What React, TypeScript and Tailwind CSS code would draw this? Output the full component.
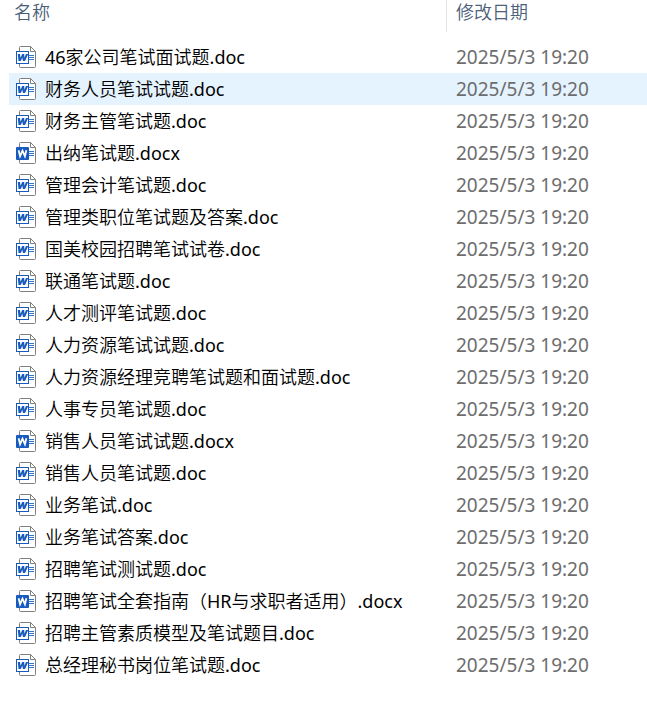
interface FileRow {
  name: string;
  modified: string;
}

const MODIFIED = '2025/5/3 19:20';

const files: FileRow[] = [
  '46家公司笔试面试题.doc',
  '财务人员笔试试题.doc',
  '财务主管笔试题.doc',
  '出纳笔试题.docx',
  '管理会计笔试题.doc',
  '管理类职位笔试题及答案.doc',
  '国美校园招聘笔试试卷.doc',
  '联通笔试题.doc',
  '人才测评笔试题.doc',
  '人力资源笔试试题.doc',
  '人力资源经理竞聘笔试题和面试题.doc',
  '人事专员笔试题.doc',
  '销售人员笔试试题.docx',
  '销售人员笔试题.doc',
  '业务笔试.doc',
  '业务笔试答案.doc',
  '招聘笔试测试题.doc',
  '招聘笔试全套指南（HR与求职者适用）.docx',
  '招聘主管素质模型及笔试题目.doc',
  '总经理秘书岗位笔试题.doc',
].map(name => ({ name, modified: MODIFIED }));

const HIGHLIGHTED = '财务人员笔试试题.doc';

// .doc gets the outlined badge, .docx the solid one
function WordIcon({ legacy }: { legacy: boolean }) {
  return (
    <svg viewBox="0 0 22 24" className="block w-[22px] h-6 shrink-0" aria-hidden="true">
      <path d="M5.5 1.5h10l5 5v15q0 1-1 1h-14q-1 0-1-1v-19q0-1 1-1z" fill="#fff" stroke="#7f7f7f" />
      <path d="M15.5 1.5v5h5" fill="none" stroke="#7f7f7f" />
      <path d="M14 10.5h5M14 12.5h5M14 14.5h5" stroke="#2f78d0" />
      {legacy ? (
        <>
          <rect x="1.5" y="6.5" width="12" height="12" fill="#fff" stroke="#185abd" />
          <path d="M2.8 9l.7 7h2.3l1.6-3.6.4 3.600h2.300L13.200 9h-2.200l-1.500 3.800L9.200 9H7.200l-1.700 3.800L5 9z" fill="#185abd" />
        </>
      ) : (
        <>
          <rect x="1" y="6" width="13" height="13" rx="1" fill="#185abd" />
          <path d="M3.6 9.200l1.500 6 2.400-5.500 2.400 5.500 1.500-6" fill="none" stroke="#fff" strokeWidth="1.8" />
        </>
      )}
    </svg>
  );
}

export default function App() {
  return (
    <main className="min-h-screen bg-white pl-[9px] font-['Noto_Sans','Noto_Sans_CJK_SC_DemiLight','Noto_Sans_CJK_SC',sans-serif] text-lg leading-8">
      <table className="w-full table-fixed border-collapse text-left">
        <thead>
          <tr className="h-[41px] align-top text-[#4c607a]">
            <th className="w-[438px] p-0 font-normal">
              <div className="h-8 border-r border-[#e5e5e5] pl-[5px] leading-6">名称</div>
            </th>
            <th className="p-0 pl-[9px] font-normal leading-6">修改日期</th>
          </tr>
        </thead>
        <tbody>
          {files.map(f => (
            <tr key={f.name} className={`h-8 ${f.name === HIGHLIGHTED ? 'bg-[#e5f3ff]' : ''}`}>
              <td className="p-0">
                <div className="flex h-8 items-center gap-2 pl-[6px] text-black whitespace-nowrap">
                  <WordIcon legacy={f.name.endsWith('.doc')} />
                  <span>{f.name}</span>
                </div>
              </td>
              <td className="p-0 pl-[9px] text-[19px] leading-8 text-[#6d6d6d] whitespace-nowrap">{f.modified}</td>
            </tr>
          ))}
        </tbody>
      </table>
    </main>
  );
}
